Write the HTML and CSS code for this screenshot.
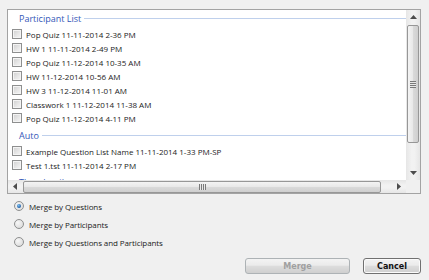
FILE: index.html
```html
<!DOCTYPE html>
<html>
<head>
<meta charset="utf-8">
<link rel="stylesheet" href="styles.css">
</head>
<body>
<div class="dialog">
  <div class="listbox">
    <div class="viewport">
      <div class="group first">
        <div class="group-head"><span>Participant List</span><i class="rule"></i></div>
        <div class="item"><span class="check"></span><span>Pop Quiz 11-11-2014 2-36 PM</span></div>
        <div class="item"><span class="check"></span><span>HW 1 11-11-2014 2-49 PM</span></div>
        <div class="item"><span class="check"></span><span>Pop Quiz 11-12-2014 10-35 AM</span></div>
        <div class="item"><span class="check"></span><span>HW 11-12-2014 10-56 AM</span></div>
        <div class="item"><span class="check"></span><span>HW 3 11-12-2014 11-01 AM</span></div>
        <div class="item"><span class="check"></span><span>Classwork 1 11-12-2014 11-38 AM</span></div>
        <div class="item"><span class="check"></span><span>Pop Quiz 11-12-2014 4-11 PM</span></div>
      </div>
      <div class="group">
        <div class="group-head"><span>Auto</span><i class="rule"></i></div>
        <div class="item"><span class="check"></span><span>Example Question List Name 11-11-2014 1-33 PM-SP</span></div>
        <div class="item"><span class="check"></span><span>Test 1.tst 11-11-2014 2-17 PM</span></div>
      </div>
      <div class="group">
        <div class="group-head"><span>Thumbnails</span><i class="rule"></i></div>
      </div>
    </div>
    <div class="vscroll">
      <div class="sb-btn"><svg width="7" height="4" viewBox="0 0 7 4"><path d="M0 4 L3.5 0 L7 4 Z" fill="#4d4d4d"/></svg></div>
      <div class="vthumb"><span class="vgrip"></span></div>
      <div class="sb-space"></div>
      <div class="sb-btn"><svg width="7" height="4" viewBox="0 0 7 4"><path d="M0 0 L3.5 4 L7 0 Z" fill="#4d4d4d"/></svg></div>
    </div>
    <div class="hscroll">
      <div class="sb-btn"><svg width="4" height="7" viewBox="0 0 4 7"><path d="M4 0 L0 3.5 L4 7 Z" fill="#4d4d4d"/></svg></div>
      <div class="hthumb"><span class="hgrip"></span></div>
      <div class="sb-space"></div>
      <div class="sb-btn"><svg width="4" height="7" viewBox="0 0 4 7"><path d="M0 0 L4 3.5 L0 7 Z" fill="#4d4d4d"/></svg></div>
    </div>
    <div class="corner"></div>
  </div>

  <div class="options">
    <div class="option"><span class="radio checked"></span><span>Merge by Questions</span></div>
    <div class="option"><span class="radio"></span><span>Merge by Participants</span></div>
    <div class="option"><span class="radio"></span><span>Merge by Questions and Participants</span></div>
  </div>

  <div class="actions">
    <div class="btn merge disabled">Merge</div>
    <div class="btn cancel">Cancel</div>
  </div>
</div>
</body>
</html>
```

FILE: styles.css
```css
html, body {
  margin: 0;
  padding: 0;
}
body {
  background: #f0f0f0;
  font-family: "Open Sans", "Liberation Sans", sans-serif;
  font-size: 8px;
  color: #1b1b1b;
}
.dialog {
  width: 429px;
  height: 280px;
  display: flex;
  flex-direction: column;
  box-sizing: border-box;
  padding: 9px 8px 6px 7px;
}
.listbox {
  height: 185px;
  box-sizing: border-box;
  border: 1px solid #a3a3a3;
  display: grid;
  grid-template-columns: 1fr 14px;
  grid-template-rows: 1fr 13px;
  background: #fff;
}
.viewport {
  overflow: hidden;
  background: #fff;
  padding-top: 1px;
}
.group + .group {
  margin-top: 3px;
}
.group-head {
  height: 14px;
  display: flex;
  align-items: center;
  padding-left: 11px;
  color: #3457b8;
  font-size: 9px;
  margin-bottom: 2px;
}
.rule {
  flex: 1;
  height: 1px;
  background: #bfd0ec;
  margin-left: 3px;
}
.item {
  height: 14px;
  display: flex;
  align-items: center;
  white-space: nowrap;
}
.check {
  width: 10px;
  height: 10px;
  box-sizing: border-box;
  border: 1px solid #8e8f8f;
  background: linear-gradient(135deg, #cfcfcf 0%, #e8e8e8 60%, #f6f6f6 100%);
  box-shadow: inset 0 0 0 1px #f4f4f4;
  margin: 0 4px 0 4px;
  flex: none;
}

/* scrollbars */
.vscroll {
  display: flex;
  flex-direction: column;
  background: linear-gradient(90deg, #e6e6e6, #f2f2f2 40%, #f2f2f2 60%, #e6e6e6);
}
.hscroll {
  display: flex;
  background: linear-gradient(180deg, #e6e6e6, #f2f2f2 40%, #f2f2f2 60%, #e6e6e6);
}
.sb-btn {
  width: 14px;
  min-height: 13px;
  flex: none;
  display: flex;
  align-items: center;
  justify-content: center;
}
.vscroll .sb-btn {
  height: 14px;
}
.sb-space {
  flex: 1;
}
.vthumb {
  margin: 1px 1px 0 1px;
  height: 118px;
  box-sizing: border-box;
  border: 1px solid #979797;
  border-radius: 2px;
  background: linear-gradient(90deg, #f4f4f4 0%, #e9e9e9 45%, #d9d9d9 55%, #cfcfcf 100%);
  display: flex;
  align-items: center;
  justify-content: center;
}
.vgrip {
  width: 6px;
  height: 7px;
  background: repeating-linear-gradient(180deg, #7a7a7a 0 1px, #e8e8e8 1px 2px);
}
.hthumb {
  margin: 1px 0 0 1px;
  width: 358px;
  box-sizing: border-box;
  border: 1px solid #979797;
  border-radius: 2px;
  background: linear-gradient(180deg, #f4f4f4 0%, #e9e9e9 45%, #d9d9d9 55%, #cfcfcf 100%);
  display: flex;
  align-items: center;
  justify-content: center;
}
.hgrip {
  width: 7px;
  height: 6px;
  background: repeating-linear-gradient(90deg, #7a7a7a 0 1px, #e8e8e8 1px 2px);
}
.corner {
  background: #f0f0f0;
}

/* options */
.options {
  margin-top: 3px;
  display: flex;
  flex-direction: column;
}
.option {
  height: 18px;
  display: flex;
  align-items: center;
  padding-left: 7px;
  white-space: nowrap;
  letter-spacing: -0.1px;
}
.radio {
  width: 10px;
  height: 10px;
  box-sizing: border-box;
  border-radius: 50%;
  border: 1px solid #8e8f8f;
  background: radial-gradient(circle at 35% 35%, #f7f7f7 0%, #dcdcdc 80%);
  margin-right: 5px;
  flex: none;
  display: flex;
  align-items: center;
  justify-content: center;
}
.radio.checked::after {
  content: "";
  width: 4px;
  height: 4px;
  border-radius: 50%;
  background: radial-gradient(circle at 40% 35%, #7ec0f0 0%, #1f5fa8 70%, #1b4f8c 100%);
}

/* buttons */
.actions {
  margin-top: auto;
  display: flex;
  justify-content: flex-end;
  gap: 13px;
}
.btn {
  height: 16px;
  box-sizing: border-box;
  border-radius: 3px;
  display: flex;
  align-items: center;
  justify-content: center;
  font-family: "DejaVu Sans", sans-serif;
  font-weight: bold;
  font-size: 8px;
  background: linear-gradient(180deg, #f3f3f3 0%, #ebebeb 45%, #dddddd 50%, #cfcfcf 100%);
}
.merge {
  width: 105px;
  border: 1px solid #adb2b5;
  color: #a0a0a0;
}
.cancel {
  width: 58px;
  border: 1px solid #707070;
  color: #111;
  box-shadow: inset 0 0 0 1px #fbfbfb;
}
```
